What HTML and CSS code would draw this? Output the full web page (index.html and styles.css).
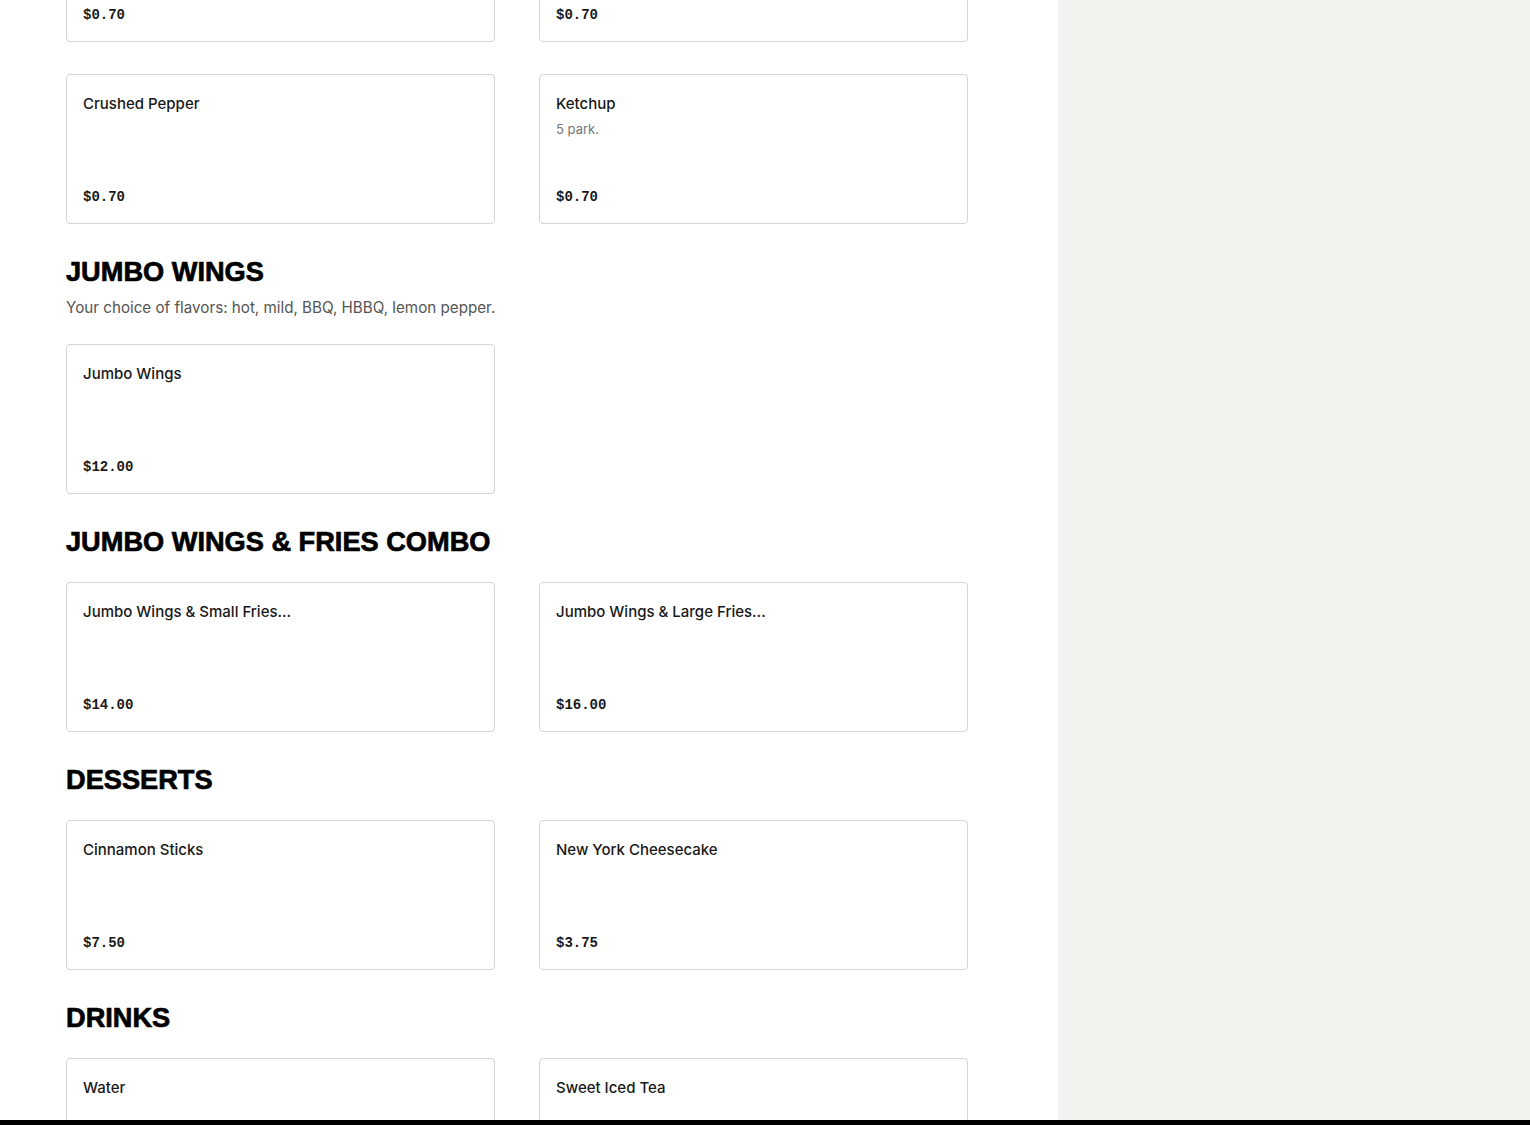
FILE: index.html
```html
<!DOCTYPE html>
<html lang="en">
<head>
  <meta charset="UTF-8" />
  <meta name="viewport" content="width=device-width, initial-scale=1.0"/>
  <title>Menu</title>
  <link rel="stylesheet" href="styles.css">
</head>
<body>

<div class="page">
  <main class="menu">

    <section class="category category-first">
      <div class="items">
        <div class="item">
          <div class="item-name">Ranch</div>
          <div class="item-price">$0.70</div>
        </div>
        <div class="item">
          <div class="item-name">Hot Sauce</div>
          <div class="item-price">$0.70</div>
        </div>
        <div class="item">
          <div class="item-name">Crushed Pepper</div>
          <div class="item-price">$0.70</div>
        </div>
        <div class="item">
          <div class="item-name">Ketchup</div>
          <div class="item-desc">5 park.</div>
          <div class="item-price">$0.70</div>
        </div>
      </div>
    </section>

    <section class="category">
      <div class="category-head">
        <h2>Jumbo Wings</h2>
        <p>Your choice of flavors: hot, mild, BBQ, HBBQ, lemon pepper.</p>
      </div>
      <div class="items">
        <div class="item">
          <div class="item-name">Jumbo Wings</div>
          <div class="item-price">$12.00</div>
        </div>
      </div>
    </section>

    <section class="category">
      <div class="category-head">
        <h2>Jumbo Wings &amp; Fries Combo</h2>
      </div>
      <div class="items">
        <div class="item">
          <div class="item-name">Jumbo Wings &amp; Small Fries...</div>
          <div class="item-price">$14.00</div>
        </div>
        <div class="item">
          <div class="item-name">Jumbo Wings &amp; Large Fries...</div>
          <div class="item-price">$16.00</div>
        </div>
      </div>
    </section>

    <section class="category">
      <div class="category-head">
        <h2>Desserts</h2>
      </div>
      <div class="items">
        <div class="item">
          <div class="item-name">Cinnamon Sticks</div>
          <div class="item-price">$7.50</div>
        </div>
        <div class="item">
          <div class="item-name">New York Cheesecake</div>
          <div class="item-price">$3.75</div>
        </div>
      </div>
    </section>

    <section class="category">
      <div class="category-head">
        <h2>Drinks</h2>
      </div>
      <div class="items">
        <div class="item">
          <div class="item-name">Water</div>
          <div class="item-price">$1.50</div>
        </div>
        <div class="item">
          <div class="item-name">Sweet Iced Tea</div>
          <div class="item-price">$2.50</div>
        </div>
      </div>
    </section>

  </main>

  <aside class="cart"></aside>
</div>

<div class="bottom-bar"></div>

</body>
</html>
```

FILE: styles.css
```css
* {
  box-sizing: border-box;
  margin: 0;
  padding: 0;
}

html, body {
  height: 100%;
  overflow: hidden;
}

body {
  background: #fff;
  font-family: 'Inter', 'Liberation Sans', sans-serif;
  color: #191919;
}

.page {
  display: flex;
  min-height: 100%;
}

.menu {
  flex: 0 0 1058px;
  padding: 0 90px 0 66px;
}

.cart {
  flex: 1;
  background: #f3f2ef;
}

.category {
  margin-top: 32px;
}

.category-first {
  margin-top: -108px;
}

.category-head {
  display: flex;
  flex-direction: column;
  gap: 8px;
  margin-bottom: 24px;
}

.category-head h2 {
  font-family: 'Liberation Sans', Arial, sans-serif;
  font-weight: 700;
  font-size: 27.2px;
  line-height: 32px;
  text-transform: uppercase;
  color: #000;
  -webkit-text-stroke: 0.7px #000;
}

.category-head p {
  font-size: 15.2px;
  line-height: 24px;
  color: #555;
}

.items {
  display: grid;
  grid-template-columns: 1fr 1fr;
  gap: 32px 44px;
}

.item {
  display: flex;
  flex-direction: column;
  height: 150px;
  padding: 17px 16px 14px;
  border: 1px solid #d4d4d4;
  border-radius: 4px;
  background: #fff;
}

.item-name {
  font-size: 15px;
  font-weight: 500;
  line-height: 24px;
  color: #191919;
}

.item-desc {
  margin-top: 3px;
  font-size: 13px;
  line-height: 20px;
  color: #767676;
}

.item-price {
  margin-top: auto;
  font-family: 'Liberation Mono', monospace;
  font-size: 14px;
  font-weight: 700;
  line-height: 24px;
  color: #191919;
}

.bottom-bar {
  position: fixed;
  left: 0;
  right: 0;
  bottom: 0;
  height: 5px;
  background: #000;
}
```
